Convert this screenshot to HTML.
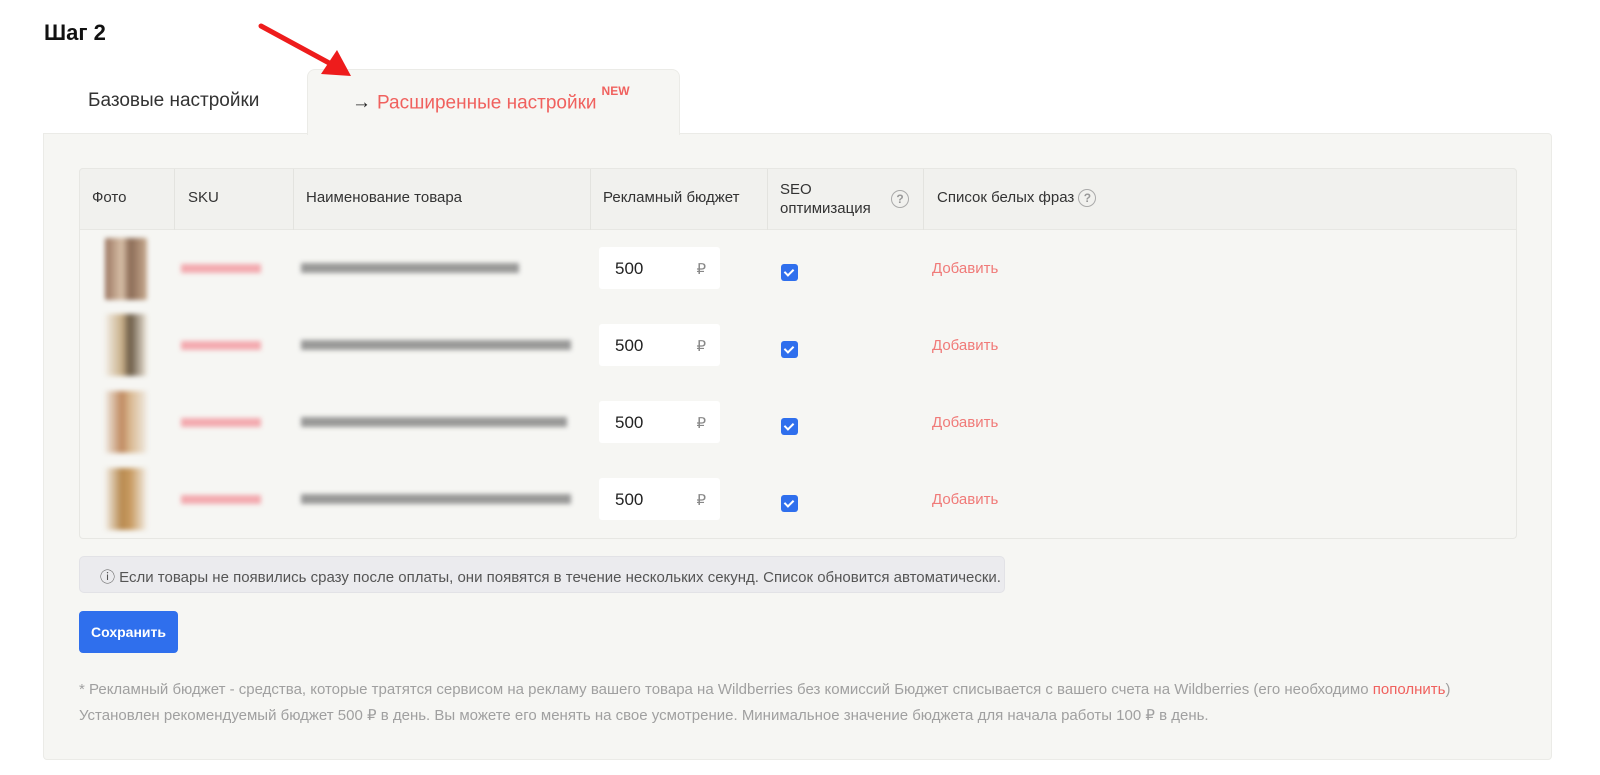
<!DOCTYPE html>
<html><head><meta charset="utf-8"><style>
*{box-sizing:border-box;margin:0;padding:0}
body{width:1600px;height:775px;background:#fff;font-family:"Liberation Sans",sans-serif;position:relative;overflow:hidden;color:#333}
.abs{position:absolute}
h1{position:absolute;left:44px;top:20px;font-size:22px;font-weight:bold;color:#111}
.panel{left:43px;top:133px;width:1509px;height:627px;background:#f6f6f3;border:1px solid #ebebe7;border-radius:0 4px 4px 4px}
.tab{left:307px;top:69px;width:373px;height:66px;background:#f6f6f3;border:1px solid #ebebe7;border-bottom:none;border-radius:8px 8px 0 0}
.t1{left:88px;top:90px;font-size:19px;color:#333}
.t2{left:352px;top:90px;font-size:19px;color:#f0615e}
.t2 .a{color:#222;margin-right:6px}
.t2 sup{font-size:12px;font-weight:bold;position:relative;top:-6px;margin-left:5px}
.table{left:79px;top:168px;width:1438px;height:371px;border:1px solid #e7e7e3;border-radius:4px;background:#f6f6f3}
.head{left:79px;top:168px;width:1438px;height:62px;background:#f1f1ee;border:1px solid #e7e7e3;border-radius:4px 4px 0 0}
.vl{top:169px;width:1px;height:61px;background:#e3e3df}
.hc{font-size:15px;color:#333;top:189px}
.q{display:inline-block;width:18px;height:18px;border:1.5px solid #aaa;border-radius:50%;color:#999;font-size:12px;text-align:center;line-height:16px;font-weight:bold}
.img{width:42px;height:62px;filter:blur(2.5px);border-radius:2px}
.sku{width:80px;height:9px;filter:blur(2.5px);background:#f3a2a8;opacity:.9}
.nm{height:10px;filter:blur(2.5px);background:#7a7a7a;opacity:.75}
.inp{width:121px;height:42px;background:#fff;border-radius:3px;font-size:17px;color:#222;padding:12px 0 0 16px}
.inp span{position:absolute;right:14px;top:13px;color:#888;font-size:15px}
.cb{width:17px;height:17px;background:#2f6fed;border-radius:3px}
.cb:after{content:"";position:absolute;left:5px;top:3px;width:4px;height:7px;border:solid #fff;border-width:0 2px 2px 0;transform:rotate(45deg)}
.add{font-size:15px;color:#f07a78}
.info{left:79px;top:556px;width:926px;height:37px;background:#ebebee;border:1px solid #e2e2e6;border-radius:5px;font-size:15px;color:#555;padding:9px 0 0 20px}
.btn{left:79px;top:611px;width:99px;height:42px;background:#2f6fed;border-radius:4px;color:#fff;font-weight:bold;font-size:14px;text-align:center;line-height:42px}
.fn{left:79px;font-size:15px;color:#a0a0a0}
.fn a{color:#f0615e;text-decoration:none}
</style></head><body>
<h1>Шаг 2</h1>
<div class="abs panel"></div>
<div class="abs tab"></div>
<svg class="abs" style="left:255px;top:20px;z-index:5" width="100" height="62"><line x1="6" y1="6" x2="76" y2="44" stroke="#ee1c1c" stroke-width="5" stroke-linecap="round"/><polygon points="96,56 66,54 82,30" fill="#ee1c1c"/></svg>
<div class="abs t1">Базовые настройки</div>
<div class="abs t2"><span class="a">→</span>Расширенные настройки<sup>NEW</sup></div>
<div class="abs table"></div>
<div class="abs head"></div>
<div class="abs vl" style="left:174px"></div><div class="abs vl" style="left:293px"></div><div class="abs vl" style="left:590px"></div><div class="abs vl" style="left:767px"></div><div class="abs vl" style="left:923px"></div>
<div class="abs hc" style="left:92px">Фото</div>
<div class="abs hc" style="left:188px">SKU</div>
<div class="abs hc" style="left:306px">Наименование товара</div>
<div class="abs hc" style="left:603px">Рекламный бюджет</div>
<div class="abs" style="left:780px;top:180px;font-size:15px;line-height:19px">SEO<br>оптимизация</div>
<div class="abs q" style="left:891px;top:190px">?</div>
<div class="abs hc" style="left:937px">Список белых фраз <span class="q" style="vertical-align:middle">?</span></div>

<div class="abs img" style="left:105px;top:238px;background:linear-gradient(90deg,#9a7560,#d8c0a8 40%,#8a6a55 60%,#c8ab90)"></div>
<div class="abs img" style="left:105px;top:314px;background:linear-gradient(90deg,#f3efe8,#c9b08a 40%,#6a5a45 60%,#efe8dc)"></div>
<div class="abs img" style="left:105px;top:391px;background:linear-gradient(90deg,#f0ebe3,#c08a60 40%,#d9b890 60%,#f0ebe3)"></div>
<div class="abs img" style="left:105px;top:468px;background:linear-gradient(90deg,#f3efe8,#b88a50 40%,#c89a60 60%,#f3efe8)"></div>

<div class="abs sku" style="left:181px;top:264px"></div>
<div class="abs sku" style="left:181px;top:341px"></div>
<div class="abs sku" style="left:181px;top:418px"></div>
<div class="abs sku" style="left:181px;top:495px"></div>
<div class="abs nm" style="left:301px;top:263px;width:218px"></div>
<div class="abs nm" style="left:301px;top:340px;width:270px"></div>
<div class="abs nm" style="left:301px;top:417px;width:266px"></div>
<div class="abs nm" style="left:301px;top:494px;width:270px"></div>

<div class="abs inp" style="left:599px;top:247px">500<span>₽</span></div>
<div class="abs inp" style="left:599px;top:324px">500<span>₽</span></div>
<div class="abs inp" style="left:599px;top:401px">500<span>₽</span></div>
<div class="abs inp" style="left:599px;top:478px">500<span>₽</span></div>
<div class="abs cb" style="left:781px;top:264px"></div>
<div class="abs cb" style="left:781px;top:341px"></div>
<div class="abs cb" style="left:781px;top:418px"></div>
<div class="abs cb" style="left:781px;top:495px"></div>
<div class="abs add" style="left:932px;top:260px">Добавить</div>
<div class="abs add" style="left:932px;top:337px">Добавить</div>
<div class="abs add" style="left:932px;top:414px">Добавить</div>
<div class="abs add" style="left:932px;top:491px">Добавить</div>

<div class="abs info">ⓘ Если товары не появились сразу после оплаты, они появятся в течение нескольких секунд. Список обновится автоматически.</div>
<div class="abs btn">Сохранить</div>
<div class="abs fn" style="top:681px">* Рекламный бюджет - средства, которые тратятся сервисом на рекламу вашего товара на Wildberries без комиссий Бюджет списывается с вашего счета на Wildberries (его необходимо <a>пополнить</a>)</div>
<div class="abs fn" style="top:706px">Установлен рекомендуемый бюджет 500 ₽ в день. Вы можете его менять на свое усмотрение. Минимальное значение бюджета для начала работы 100 ₽ в день.</div>
</body></html>
